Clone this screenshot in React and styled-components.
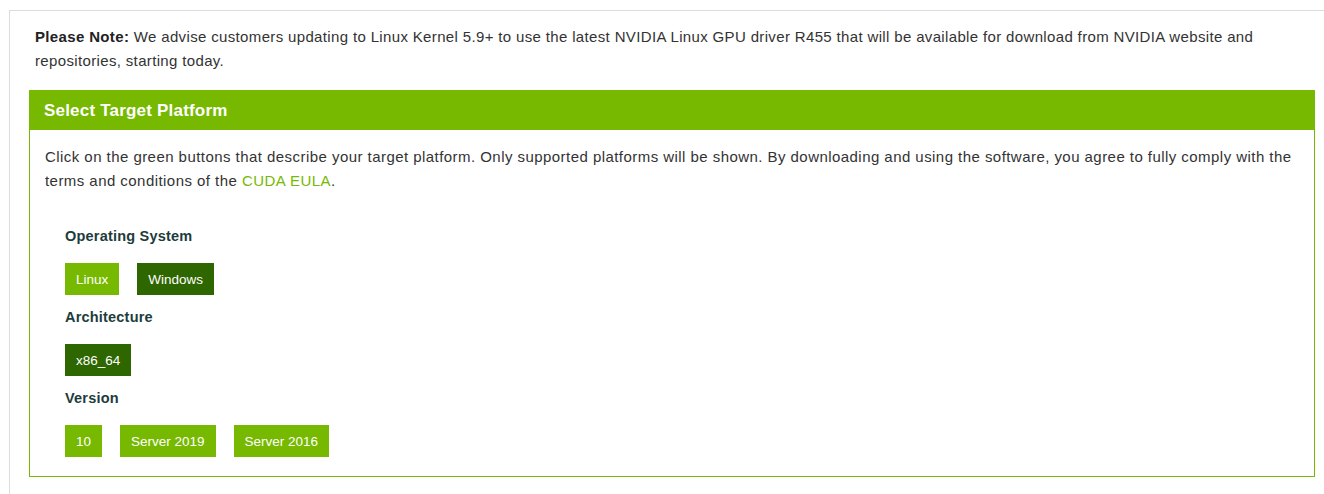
import React from "react";
import styled, { createGlobalStyle } from "styled-components";

const GlobalStyle = createGlobalStyle`
  html, body {
    margin: 0;
    padding: 0;
    background: #fff;
    overflow: hidden;
  }
  body {
    font-family: "Liberation Sans", Arial, sans-serif;
    color: #1a1a1a;
  }
`;

// outer card, its right edge runs past the window
const Card = styled.div`
  margin: 10px 0 0 9px;
  width: 1340px;
  border-top: 1px solid #dcdcdc;
  border-left: 1px solid #dcdcdc;
  padding: 14px 0 0 19px;
  box-sizing: border-box;
  min-height: 500px;
`;

const Note = styled.p`
  margin: 0 0 17px 6px;
  width: 1270px;
  font-size: 15px;
  letter-spacing: 0.35px;
  line-height: 24px;
  color: #333;
  b { color: #222; }
`;

const Panel = styled.section`
  width: 1286px;
  border: 1px solid #76b900;
  box-sizing: border-box;
`;

const PanelHeader = styled.h3`
  margin: 0;
  height: 39px;
  display: flex;
  align-items: center;
  padding: 0 14px;
  background: #76b900;
  color: #fff;
  font-size: 17px;
  letter-spacing: 0.2px;
  font-weight: 700;
`;

const PanelBody = styled.div`
  padding: 15px 14px 19px 15px;
`;

const Intro = styled.p`
  margin: 0 0 33px;
  font-size: 15px;
  letter-spacing: 0.45px;
  line-height: 24px;
  color: #333;
  a {
    color: #76b900;
    text-decoration: none;
  }
`;

const Section = styled.div`
  padding-left: 20px;
  & + & { margin-top: 12px; }
`;

const Label = styled.div`
  font-size: 14.5px;
  letter-spacing: 0.2px;
  font-weight: 700;
  line-height: 20px;
  color: #1d3c3c;
  margin-bottom: 17px;
`;

const Options = styled.div`
  display: flex;
  gap: 18px;
`;

const Option = styled.button`
  height: 32px;
  padding: 0 11px;
  border: none;
  background: ${(p) => (p.$selected ? "#2e6600" : "#76b900")};
  color: #fff;
  font-family: inherit;
  font-size: 13.5px;
  cursor: pointer;
`;

const groups = [
  { label: "Operating System", options: ["Linux", "Windows"], selected: "Windows" },
  { label: "Architecture", options: ["x86_64"], selected: "x86_64" },
  { label: "Version", options: ["10", "Server 2019", "Server 2016"], selected: null },
];

export default function App() {
  return (
    <>
      <GlobalStyle />
      <Card>
        <Note>
          <b>Please Note:</b> We advise customers updating to Linux Kernel 5.9+ to use the latest NVIDIA Linux GPU driver R455 that will be available for download from NVIDIA website and repositories, starting today.
        </Note>
        <Panel>
          <PanelHeader>Select Target Platform</PanelHeader>
          <PanelBody>
            <Intro>
              Click on the green buttons that describe your target platform. Only supported platforms will be shown. By downloading and using the software, you agree to fully comply with the terms and conditions of the <a href="#eula">CUDA EULA</a>.
            </Intro>
            {groups.map((g) => (
              <Section key={g.label}>
                <Label>{g.label}</Label>
                <Options>
                  {g.options.map((o) => (
                    <Option key={o} $selected={o === g.selected}>
                      {o}
                    </Option>
                  ))}
                </Options>
              </Section>
            ))}
          </PanelBody>
        </Panel>
      </Card>
    </>
  );
}
